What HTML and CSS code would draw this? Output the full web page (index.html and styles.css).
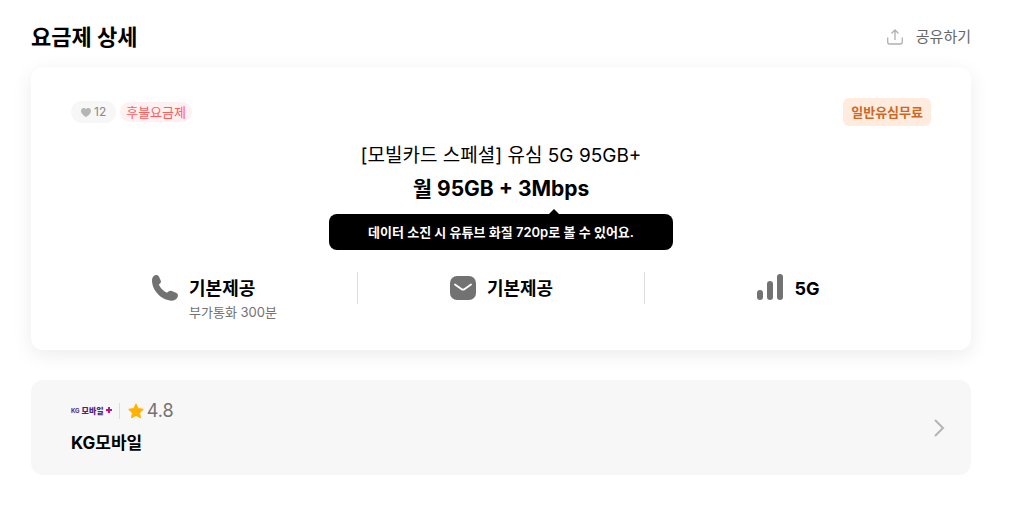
FILE: index.html
```html
<!DOCTYPE html>
<html lang="ko">
<head>
  <meta charset="UTF-8">
  <meta name="viewport" content="width=device-width, initial-scale=1.0">
  <title>요금제 상세</title>
  <link rel="stylesheet" href="styles.css">
</head>
<body>
  <main class="page">
    <header class="page-header">
      <h1>요금제 상세</h1>
      <button class="share" type="button">
        <svg width="18" height="18" viewBox="0 0 18 18" fill="none" stroke="#b0b0b0" stroke-width="1.3">
          <path d="M9 12V2.500M5.500 5.500L9 2l3.500 3.500M1.700 9.500v4.500a2 2 0 0 0 2 2h10.600a2 2 0 0 0 2-2V9.500"/>
        </svg>
        공유하기
      </button>
    </header>

    <!-- 요금제 카드 -->
    <section class="plan-card">
      <div class="badges">
        <button class="like" type="button" aria-label="찜 12">
          <svg width="10" height="9" viewBox="0 0 10 9" fill="#b5b5b5">
            <path d="M5 9C3.500 7.900 0 5.600 0 2.900 0 1.200 1.200 0 2.700 0 3.700 0 4.500.5 5 1.300 5.500.5 6.300 0 7.300 0 8.800 0 10 1.200 10 2.900 10 5.600 6.500 7.900 5 9z"/>
          </svg>
          12
        </button>
        <span class="pay-type">후불요금제</span>
        <span class="usim">일반유심무료</span>
      </div>

      <h2 class="plan-name">[모빌카드 스페셜] 유심 5G 95GB+</h2>
      <p class="plan-data">월 95GB + 3Mbps</p>
      <p class="tooltip">데이터 소진 시 유튜브 화질 720p로 볼 수 있어요.</p>

      <div class="features">
        <div class="feature">
          <svg width="28" height="28" viewBox="0 0 28 28" fill="#727272">
            <path d="M4.600 1C6 .6 7.300 1.200 7.900 2.500l1.800 3.900c.5 1.100.3 2.200-.6 3l-1.300 1.200c1.400 3.600 4.500 6.500 8.100 8.100l1.900-1.400c.9-.6 1.900-.7 2.900-.3l4.300 1.800c1.700.7 2.300 2.200 1.800 3.800-.8 2.500-3.200 4.200-5.900 4.100C10.200 26.200 1 16.500 1 6.300 1 3.600 2.200 1.700 4.600 1z"/>
          </svg>
          <div>
            <strong>기본제공</strong>
            <span>부가통화 300분</span>
          </div>
        </div>
        <div class="divider"></div>
        <div class="feature">
          <svg width="28" height="28" viewBox="0 0 28 28" fill="none">
            <rect x="1" y="2" width="26" height="24" rx="7" fill="#727272"/>
            <path d="M6 10.500l6.300 4.500a2.800 2.800 0 0 0 3.400 0l6.300-4.500" stroke="#fff" stroke-width="1.800" stroke-linecap="round"/>
          </svg>
          <div>
            <strong>기본제공</strong>
          </div>
        </div>
        <div class="divider"></div>
        <div class="feature">
          <svg width="28" height="28" viewBox="0 0 28 28" fill="#727272">
            <rect x="1" y="16" width="6" height="10" rx="3"/>
            <rect x="11" y="7" width="6" height="19" rx="3"/>
            <rect x="21" y="0" width="6" height="26" rx="3"/>
          </svg>
          <div>
            <strong>5G</strong>
          </div>
        </div>
      </div>
    </section>

    <!-- 통신사 -->
    <a class="provider" href="#">
      <div>
        <div class="provider-info">
          <span class="logo">KG <b>모바일</b>
            <svg width="6" height="6" viewBox="0 0 6 6">
              <path d="M2 0h2v2H2z" fill="#8a2a8f"/>
              <path d="M0 2h3v2H0z" fill="#e6007e"/>
              <path d="M3 2h3v2H3z" fill="#8a2a8f"/>
              <path d="M2 4h2v2H2z" fill="#e6007e"/>
            </svg>
          </span>
          <span class="rating">
            <svg width="16" height="16" viewBox="0 0 16 16" fill="#ffb300" stroke="#ffb300" stroke-width="1.200" stroke-linejoin="round">
              <path d="M8 1.200l2.100 4.500 4.900.6-3.600 3.400.9 4.900L8 12.200l-4.300 2.400.9-4.900L1 6.300l4.900-.6z"/>
            </svg>
            4.8
          </span>
        </div>
        <strong class="provider-name">KG모바일</strong>
      </div>
      <svg width="12" height="18" viewBox="0 0 12 18" fill="none" stroke="#b5b5b5" stroke-width="2">
        <path d="M2 1l8 8-8 8"/>
      </svg>
    </a>
  </main>
</body>
</html>
```

FILE: styles.css
```css
* {
  box-sizing: border-box;
}

body {
  margin: 0;
  background: #fff;
  color: #000;
  font-family: Inter, "Noto Sans CJK KR", sans-serif;
}

h1,
h2,
p {
  margin: 0;
}

button {
  border: none;
  font-family: inherit;
  cursor: pointer;
}

svg {
  flex: none;
}

.page {
  padding: 20px 42px 34px 31px;
}

.page-header {
  display: flex;
  justify-content: space-between;
  align-items: center;
  margin-bottom: 13px;
}

.page-header h1 {
  font-size: 22px;
  font-weight: 700;
  line-height: 34px;
}

.share {
  display: flex;
  align-items: center;
  gap: 12px;
  padding: 0;
  background: none;
  color: #666;
  font-size: 15px;
  line-height: 24px;
}

.plan-card {
  padding: 31px 40px 30px;
  border-radius: 12px;
  background: #fff;
  box-shadow: 0 5px 20px rgba(0, 0, 0, 0.08);
}

.badges {
  display: flex;
  align-items: center;
  gap: 4px;
}

.like {
  display: flex;
  align-items: center;
  gap: 3px;
  padding: 0 10px;
  border-radius: 11px;
  background: #f7f7f7;
  color: #888;
  font-size: 12px;
  line-height: 22px;
}

.pay-type {
  padding: 0 6px;
  border-radius: 10px;
  background: #fff0f2;
  color: #ff5c5c;
  font-size: 13px;
  line-height: 20px;
}

.usim {
  margin-left: auto;
  padding: 0 8px;
  border-radius: 6px;
  background: #ffecdf;
  color: #cf6722;
  font-size: 13px;
  font-weight: 700;
  line-height: 28px;
}

.plan-name {
  margin-top: 15px;
  font-size: 19px;
  font-weight: 400;
  line-height: 30px;
  text-align: center;
}

.plan-data {
  margin-top: 2px;
  font-size: 21px;
  font-weight: 700;
  line-height: 32px;
  text-align: center;
}

.tooltip {
  position: relative;
  max-width: 344px;
  margin: 9px auto 0;
  border-radius: 8px;
  background: #000;
  color: #fff;
  font-size: 13px;
  font-weight: 600;
  line-height: 36px;
  text-align: center;
}

.tooltip::before {
  content: "";
  position: absolute;
  top: -5px;
  right: 114px;
  border: 5px solid transparent;
  border-top: none;
  border-bottom-color: #000;
}

.features {
  display: grid;
  grid-template-columns: 1fr 1px 1fr 1px 1fr;
  align-items: start;
  margin-top: 22px;
}

.divider {
  height: 32px;
  background: #ddd;
}

.feature {
  display: flex;
  justify-content: center;
  gap: 10px;
  padding-top: 2px;
}

.feature strong,
.feature span {
  display: block;
}

.feature strong {
  font-size: 18px;
  font-weight: 700;
  line-height: 30px;
}

.feature span {
  color: #727272;
  font-size: 13px;
  line-height: 16px;
}

.provider {
  display: flex;
  justify-content: space-between;
  align-items: center;
  margin-top: 30px;
  padding: 20px 26px 19px 40px;
  border-radius: 12px;
  background: #f7f7f7;
  color: #000;
  text-decoration: none;
}

.provider-info {
  display: flex;
  align-items: center;
}

.logo {
  display: flex;
  align-items: center;
  gap: 2px;
  padding-right: 7px;
  border-right: 1px solid #ddd;
  color: #4b2382;
  font-size: 6px;
  font-weight: 700;
  line-height: 16px;
}

.logo b {
  font-size: 8px;
}

.logo svg {
  margin-bottom: 3px;
}

.rating {
  display: flex;
  align-items: center;
  gap: 3px;
  padding-left: 8px;
  color: #727272;
  font-size: 18px;
  line-height: 22px;
}

.provider-name {
  display: block;
  margin-top: 8px;
  font-size: 17px;
  font-weight: 700;
  line-height: 26px;
}
```
